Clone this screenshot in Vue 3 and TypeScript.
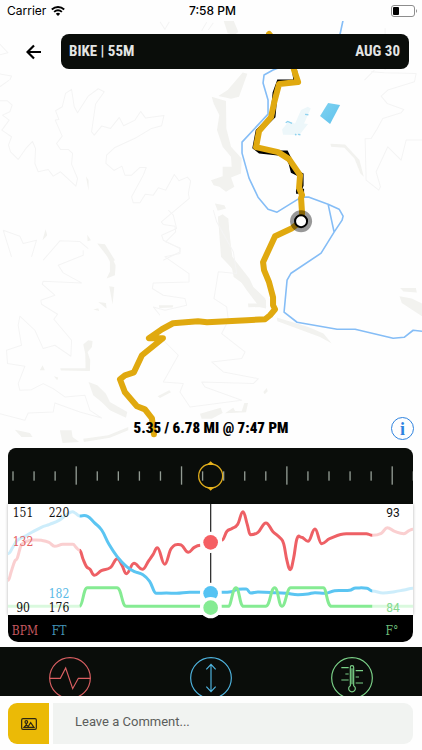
<script setup lang="ts">
import { computed, ref } from 'vue'

type Point = [number, number]

interface Segment {
  color: string
  faded: boolean
  points: Point[]
}

const RED = '#ee6065'
const BLUE = '#5bc5f2'
const GREEN = '#85eb93'

const position = ref(79)
const comment = ref('')

// Chart coordinates use three units per pixel.
const segments: Segment[] = [
  { color: RED, faded: true, points: [[25, 242], [35, 215], [45, 185], [53, 175], [64, 138], [78, 126], [100, 121], [125, 122], [148, 128], [165, 140], [190, 134], [220, 134], [230, 144], [240, 152]] },
  { color: BLUE, faded: true, points: [[25, 162], [40, 142], [52, 123], [75, 110], [98, 97], [125, 83], [150, 74], [178, 62], [200, 46], [218, 36], [228, 41], [240, 49]] },
  { color: GREEN, faded: true, points: [[25, 320], [130, 320], [240, 320]] },
  { color: RED, faded: false, points: [[240, 152], [250, 178], [260, 200], [271, 209], [284, 227], [305, 213], [333, 203], [353, 177], [367, 197], [380, 222], [403, 191], [428, 209], [448, 182], [460, 165], [473, 144], [495, 194], [515, 146], [542, 135], [566, 158], [584, 143], [602, 137]] },
  { color: BLUE, faded: false, points: [[240, 49], [264, 50], [284, 69], [306, 91], [328, 134], [352, 170], [380, 200], [403, 215], [430, 225], [450, 245], [470, 281], [500, 280], [530, 281], [570, 278], [602, 278]] },
  { color: RED, faded: false, points: [[667, 121], [682, 95], [696, 87], [714, 74], [730, 36], [743, 75], [752, 105], [775, 98], [799, 70], [820, 96], [841, 114], [852, 132], [862, 183], [872, 210], [882, 175], [892, 117], [905, 113], [925, 125], [946, 88], [966, 132], [990, 117], [1040, 102], [1100, 102], [1118, 107]] },
  { color: BLUE, faded: false, points: [[666, 278], [695, 276], [715, 269], [740, 268], [753, 280], [775, 277], [830, 279], [860, 281], [895, 285], [925, 283], [946, 279], [975, 281], [1005, 273], [1050, 272], [1068, 265], [1102, 266], [1118, 274]] },
  { color: RED, faded: true, points: [[1118, 107], [1145, 101], [1163, 84], [1185, 95], [1213, 102], [1228, 93], [1240, 89]] },
  { color: BLUE, faded: true, points: [[1118, 274], [1150, 280], [1185, 276], [1213, 271], [1240, 266]] },
  { color: GREEN, faded: true, points: [[1118, 320], [1180, 320], [1240, 320]] },
]

const greenLeft = 'M240 320 C250 318 251 264 263 264 H352 C366 264 366 320 380 320 H602'
const greenRight =
  'M666 320 H686 C695 320 698 264 709 264 C720 264 719 320 732 320 H798 C812 320 813 264 825 264 C836 264 837 320 847 320 C858 320 861 264 873 264 H971 C981 264 981 320 996 320 H1118'

function smooth(points: Point[]): string {
  let d = `M${points[0][0]} ${points[0][1]}`
  for (let i = 0; i < points.length - 1; i++) {
    const a = points[Math.max(i - 1, 0)]
    const b = points[i]
    const c = points[i + 1]
    const e = points[Math.min(i + 2, points.length - 1)]
    const turnB = (b[1] - a[1]) * (c[1] - b[1]) <= 0
    const turnC = (c[1] - b[1]) * (e[1] - c[1]) <= 0
    const span = (c[0] - b[0]) * 0.42
    const slopeB = turnB ? 0 : (c[1] - a[1]) / (c[0] - a[0])
    const slopeC = turnC ? 0 : (e[1] - b[1]) / (e[0] - b[0])
    d += ` C${b[0] + span} ${b[1] + slopeB * span} ${c[0] - span} ${c[1] - slopeC * span} ${c[0]} ${c[1]}`
  }
  return d
}

const lines = computed(() => segments.map((s) => ({ ...s, d: smooth(s.points) })))

const ticks = Array.from({ length: 20 }, (_, i) => ({
  x: 16 + i * 63.2,
  major: i % 5 === 3,
}))

const markers = [
  { y: 128, color: '#f55f63' },
  { y: 281, color: '#55c3f3' },
  { y: 324, color: '#85eb93' },
]

const route =
  'M269 34 L292 62 L294 70 L298 82 L279 84 L274 103 L271 117 L259 131 L256 147 L278 152 L289 159 L300 175 L299 188 L302 195 L301 198 L302 213 L301 221 L292 228 L275 236 L263 262 L264 270 L269 282 L273 297 L273 305 L275 309 L270 315 L265 319 L247 320 L207 322 L198 321 L173 323 L162 329 L149 338 L163 338 L142 355 L134 372 L125 375 L120 379 L125 392 L137 406 L145 409 L152 418 L154 434'
</script>

<template>
  <main class="screen">
    <section class="map">
      <svg class="terrain" viewBox="0 0 422 448" preserveAspectRatio="xMidYMid slice" aria-hidden="true">
        <g transform="scale(.33333)">
          <g class="hills">
            <g transform="translate(633 0)">
              <path d="M38 62 L68 62 L82 96 L70 105 L50 100Z" />
              <path d="M95 217 L109 221 L84 290 L60 296 L22 288 L50 270Z" />
              <path d="M2 290 L45 303 L46 385 L60 440 L92 475 L90 520 L60 532 L70 560 L45 575 L25 560 L8 555 L0 540 L35 528 L35 500 L62 500 L60 470 L35 440 L18 390 L25 345 L8 310Z" />
              <path d="M8 600 L12 610 L40 615 L45 625 L20 632Z" />
              <path d="M21 650 L36 645 L52 655 L62 800 L68 830 L165 900 L165 925 L145 920 L125 870 L30 770Z" />
              <path d="M358 431 L402 433 L445 480 L458 530 L448 520 L430 475 L400 443 L360 440Z" />
            </g>
            <g transform="translate(270 630)">
              <path d="M384 20 L398 12 L413 25 L427 140 L478 205 L490 230 L526 265 L526 290 L508 290 L470 240 L395 130Z" />
              <path d="M474 280 H515 L530 290 L475 291Z" />
              <path d="M560 322 L655 350 L700 370 L725 400 L690 380 L562 333Z" />
              <path d="M930 233 L977 233 L980 247 L940 244Z M928 258 L965 265 L996 280 V318 L935 278Z" />
              <path d="M207 285 L250 285 L248 292 L208 293Z" />
              <path d="M203 558 L238 540 L243 546 L210 563Z M520 545 L530 533 L533 543 L524 552Z" />
              <path d="M330 610 L392 592 L398 608 L365 625 L335 625Z M405 609 L430 592 L435 602 L455 603 L463 578 L474 578 L468 606Z" />
            </g>
            <g transform="translate(0 240)">
              <path d="M258 288 L266 300 L266 332Z M137 447 L142 465 L128 480Z M262 464 L273 480 L263 483Z M292 490 L315 492 L345 540 L335 545Z" />
            </g>
            <g transform="translate(0 750)">
              <path d="M313 0 L335 20 L347 45 L345 75 L320 85 L330 65 L330 35Z M328 108 L343 110 L338 163Z M280 178 L295 174 L298 182Z M295 155 L318 158 L320 175Z" />
              <path d="M250 283 L265 270 L278 272 L276 290 L263 305 L271 330 L270 362 L183 361 L181 354 L257 354 L256 310Z M128 345 L135 360 L120 360Z M162 378 L175 382 L172 390Z" />
              <path d="M266 395 L292 405 L318 430 L330 455 L382 485 L378 502 L330 480 L305 455 L280 435Z" />
              <path d="M45 538 L90 548 L98 560 L65 560Z M180 540 L215 540 L218 560 L238 575 L188 578Z M250 565 L325 555 L385 530 L385 540 L330 562 L252 575Z" />
            </g>
          </g>
          <g class="contours">
            <path transform="translate(0 240)" d="M0 20 L28 0 M0 62 H22 L37 75 L30 95 L8 105 L28 120 L6 150 L35 170 L26 195 L32 215 L55 238 L78 205 L98 184 L107 205 L105 250 L115 275 L145 268 L160 288 L182 275 L228 318 L233 295 L215 252 L218 220 L205 208 H182 L170 190 L187 168 L166 120 L177 118 L167 92 L187 80 L197 40 L215 28 L223 80 L233 98 L265 48 L295 26 L313 35 L287 72 L275 155 L283 165 L305 138 L332 145 L358 112 L371 137 L405 120 L422 94 L437 114 L492 106 L485 137 L455 145 L410 172 L345 202 L320 225 L318 250 L342 271 L366 258 L375 285 H395 L420 262 H439 L430 285 L395 350 L400 368 H420 L436 342 L460 345 L475 323 L497 330 L523 283 L537 302 L562 291 L572 302 L565 340 L568 355 L484 425 L490 433 L525 438 L527 455 L497 485 L540 503 V515 L490 540 M10 450 L60 468 L70 490 L110 480 L95 530 M10 450 L35 530 M130 540 L180 482 L240 484 L265 505" />
            <path transform="translate(0 750)" d="M250 0 L250 15 L175 45 L190 68 L245 98 L130 93 L127 102 L165 135 L123 150 L125 162 L173 192 L162 207 L215 270 L213 318 L165 285 L130 295 L105 240 L60 198 L55 225 L65 285 L20 300 L23 340 L75 348 L55 400 L60 420 L95 418 L130 400 L160 415 L195 440 L255 435 L270 480 L305 503 L240 485 L165 458 L160 485 L85 488 L75 510 L0 490" />
            <path transform="translate(270 630)" d="M235 0 L250 15 L260 55 L215 75 L220 90 L270 115 V130 L225 140 L297 190 V215 L190 218 L187 235 L220 255 L285 265 L290 285 L225 300 L190 290 L210 315 M370 0 L380 35 L430 125 L440 190 L385 185 L372 265 L410 290 L415 330 L395 370 L465 425 L455 445 L365 455 L400 485 L505 505 L490 520 L335 515 L345 530 L455 570 L300 590 L270 545 L280 520 L220 515 L265 435 L220 390" />
            <path transform="translate(633 210)" d="M480 5 L520 8 L615 10 L610 35 L530 60 L510 78 L528 100 L578 118 L570 128 L515 145 L497 178 L480 205 L462 206 L465 330 L503 360 L508 350 L495 305 L530 230 L570 270 L585 210 L633 210 M522 0 V-125 M460 30 L490 0" />
            <path d="M480 65 L495 88 L508 65 M0 132 L24 158 L0 164 M0 222 L35 228 L30 240 M605 92 L620 67 M625 90 L640 68" />
          </g>
          <path class="wetland" d="M903 330 L923 320 L932 325 L912 370 L924 372 L898 405 L849 404 L846 388 L865 365 L885 370Z" />
          <path class="ripples" d="M857 368 L863 364 L876 370 M915 343 L925 344 M885 402 L889 405 M894 403 L901 404" />
        </g>
        <defs>
          <linearGradient id="pond" x1="0" y1="0" x2="1" y2="1">
            <stop offset="0" stop-color="#7fd2f1" />
            <stop offset="1" stop-color="#60c2ec" />
          </linearGradient>
        </defs>
        <path fill="url(#pond)" d="M328 103 L340 105 L330 124 L320 116Z" />
        <path class="river" d="M343 20 L340 34 L320 52 L273 70 L264 75 L263 83 L268 100 L268 114 L242 142 L242 153 L249 178 L258 197 L268 209 L277 212 L298 199 L303 197 L309 197 L328 204 L339 209 L343 216 L342 220 L334 232 L321 253 L291 273 L287 280 L284 312 L297 322 L337 329 L355 329 L393 338 L404 337 L413 330 L422 331 M328 204 L334 232" />
        <path class="track" d="M294 66 L296 82 L279 82 L275 93 L273 116 L258 131 L255 147 L260 151 L278 153 M277 153 L286 153 L291 163 L293 171 L301 175 L301 185 L298 192 M296 191 L304 191" />
        <path class="route" :d="route" />
        <circle cx="301" cy="221" r="11" fill="#000" fill-opacity=".4" />
        <circle cx="301" cy="221" r="6" fill="#fff" stroke="#000" stroke-width="2" />
      </svg>

      <header class="top">
        <div class="status">
          <div class="carrier">
            <span>Carrier</span>
            <svg width="14" height="10" viewBox="0 0 14 10" aria-hidden="true">
              <g fill="none" stroke="#000" stroke-width="1.9">
                <path d="M.8 3.5 C4.4 .2 9.6 .2 13.2 3.5" />
                <path d="M3.1 5.9 C5.4 3.9 8.6 3.9 10.9 5.9" />
              </g>
              <path d="M7 10 L4.8 7.7 Q7 6 9.2 7.7Z" />
            </svg>
          </div>
          <time class="clock">7:58 PM</time>
          <svg class="battery" width="27" height="12" viewBox="0 0 27 12" aria-hidden="true">
            <rect x=".5" y=".5" width="23" height="11" rx="2.5" fill="#fff" stroke="#8d8d8d" />
            <rect x="2" y="2" width="6" height="8" rx="1" />
            <path d="M25 4 Q27 6 25 8Z" fill="#8d8d8d" />
          </svg>
        </div>
        <div class="bar">
          <button class="back" type="button" aria-label="Back">
            <svg width="16" height="16" viewBox="0 0 16 16" aria-hidden="true">
              <path d="M15 8 H2 M8 1.5 L1.5 8 L8 14.5" fill="none" stroke="#000" stroke-width="2.2" />
            </svg>
          </button>
          <h1 class="title"><span>BIKE | 55M</span><span>AUG 30</span></h1>
        </div>
      </header>

      <div class="progress">
        <p class="distance">5.35 / 6.78 MI @ 7:47 PM</p>
        <button class="info" type="button" aria-label="Information">i</button>
      </div>
    </section>

    <section class="panel">
      <div class="ruler">
        <svg viewBox="0 0 1215 168" aria-hidden="true">
          <rect
            v-for="tick in ticks"
            :key="tick.x"
            :x="tick.x - 3"
            :y="tick.major ? 55 : 70"
            width="4"
            :height="tick.major ? 55 : 28"
            fill="#929b93"
          />
          <circle cx="608" cy="84" r="36" fill="none" stroke="#dba91b" stroke-width="4" />
          <path d="M592 51 Q602 48 608 40 Q614 48 624 51Z M592 117 Q602 120 608 128 Q614 120 624 117Z" fill="#e5b11c" />
        </svg>
        <input v-model.number="position" type="range" min="0" max="100" aria-label="Position on route" />
      </div>

      <div class="chart">
        <svg viewBox="25 13 1215 332" aria-hidden="true">
          <path d="M633 13 V345" stroke="#333" stroke-width="4" />
          <g fill="none" stroke-width="9">
            <path
              v-for="(line, i) in lines"
              :key="i"
              :d="line.d"
              :stroke="line.color"
              :stroke-opacity="line.faded ? 0.3 : 1"
            />
            <path :d="greenLeft" stroke="#85eb93" />
            <path :d="greenRight" stroke="#85eb93" />
          </g>
          <template v-for="m in markers" :key="m.y">
            <circle cx="633" :cy="m.y" r="32" fill="#fff" />
            <circle cx="633" :cy="m.y" r="22" :fill="m.color" />
          </template>
        </svg>
        <div class="scales">
          <div class="scale bpm"><span>151</span><span class="now">132</span><span class="low">90</span></div>
          <div class="scale feet"><span>220</span><span class="now">182</span><span class="low">176</span></div>
          <div class="scale temp"><span>93</span><span class="now low">84</span></div>
        </div>
      </div>

      <div class="units">
        <span class="bpm">BPM</span>
        <span class="feet">FT</span>
        <span class="temp">F°</span>
      </div>
    </section>

    <nav class="metrics">
      <button type="button" aria-label="Heart rate">
        <svg viewBox="0 0 126 126" fill="none" stroke="#d95f62" stroke-width="3.5">
          <circle cx="63" cy="63" r="61" />
          <path d="M2 64 H34 L50 33 L71 95 L88 64 H124" />
        </svg>
      </button>
      <button type="button" aria-label="Elevation">
        <svg viewBox="0 0 126 126" fill="none" stroke="#4fb4df" stroke-width="3.5">
          <circle cx="63" cy="63" r="61" />
          <path d="M63 23 V103 M49 37 L63 22 L77 37 M49 89 L63 104 L77 89" />
        </svg>
      </button>
      <button type="button" aria-label="Temperature">
        <svg viewBox="0 0 126 126" fill="none" stroke="#7bd188" stroke-width="3.5">
          <circle cx="63" cy="63" r="61" />
          <path d="M58 86 V31 Q58 26 63 26 Q68 26 68 31 V86 A10 10 0 1 1 58 86Z M63 34 V82" />
          <path d="M31 32 H53 M43 51 H53 M31 69 H53 M74 41 H96 M74 60 H84 M74 78 H96" />
        </svg>
      </button>
    </nav>

    <form class="comment" @submit.prevent>
      <button type="button" aria-label="Add picture">
        <svg width="16" height="12" viewBox="0 0 48 36" fill="none" stroke="#2b2612" stroke-width="3.5" aria-hidden="true">
          <rect x="2" y="2" width="44" height="32" rx="4" />
          <circle cx="16" cy="12" r="4" />
          <path d="M9 28 L15 21 L22 25 L29 14 L39 28Z M16 16 V21" />
        </svg>
      </button>
      <input v-model="comment" type="text" placeholder="Leave a Comment..." aria-label="Leave a comment" />
    </form>
  </main>
</template>

<style>
body {
  margin: 0;
  background: #fff;
}
</style>

<style scoped>
.screen {
  display: flex;
  flex-direction: column;
  min-height: 100vh;
  box-sizing: border-box;
  padding-bottom: 6px;
  background: #fefefe;
  font-family: Roboto, sans-serif;
}

button {
  padding: 0;
  border: 0;
  background: none;
  cursor: pointer;
}

svg {
  display: block;
}

.map {
  position: relative;
  display: flex;
  flex: 1;
  flex-direction: column;
  justify-content: space-between;
}

.terrain {
  position: absolute;
  inset: 0;
  width: 100%;
  height: 100%;
}

.hills {
  fill: #f2f2ef;
}

.contours {
  fill: none;
  stroke: #f4f4f4;
  stroke-width: 3;
  stroke-linejoin: round;
}

.wetland {
  fill: #edf7fa;
}

.ripples {
  fill: none;
  stroke: #8fd2ef;
  stroke-width: 4;
}

.river {
  fill: none;
  stroke: #85bdf6;
  stroke-width: 1.6;
  stroke-linejoin: round;
}

.track {
  fill: none;
  stroke: #000;
  stroke-width: 5;
}

.route {
  fill: none;
  stroke: #e0a90f;
  stroke-width: 6;
  stroke-linejoin: round;
  stroke-linecap: round;
}

.top,
.progress {
  position: relative;
}

.status {
  display: grid;
  grid-template-columns: 1fr auto 1fr;
  align-items: center;
  height: 21px;
  padding: 0 4px 0 7px;
  background: #fefefe;
  font: 12px/21px Inter, sans-serif;
}

.carrier {
  display: flex;
  align-items: center;
  gap: 5px;
}

.clock {
  font-weight: 500;
}

.battery {
  justify-self: end;
}

.bar {
  display: flex;
  align-items: center;
  padding: 13px 13px 0 20px;
}

.back {
  display: grid;
  place-items: center;
  width: 28px;
  height: 35px;
  margin-right: 13px;
}

.title {
  display: flex;
  flex: 1;
  justify-content: space-between;
  margin: 0;
  padding: 0 9px 0 8px;
  border-radius: 8px;
  background: #0a0d0a;
  color: #e4e5e4;
  font: 700 15px/35px "Roboto Condensed", "Liberation Sans Narrow", sans-serif;
}

.progress {
  display: grid;
  grid-template-columns: 1fr auto 1fr;
  align-items: center;
  padding: 0 8px 8px;
}

.distance {
  grid-column: 2;
  margin: 0;
  color: #000;
  font: 900 15px/23px "Roboto Condensed", "Liberation Sans Narrow", sans-serif;
}

.info {
  justify-self: end;
  box-sizing: border-box;
  width: 23px;
  height: 23px;
  border: 1px solid #2e83df;
  border-radius: 50%;
  color: #2e83df;
  font: 700 18px/20px "Liberation Serif", serif;
}

.panel {
  margin: 0 9px 5px 8px;
  border-radius: 10px;
  background: #000;
}

.ruler {
  position: relative;
  overflow: hidden;
  border-radius: 8px 8px 0 0;
  background: #0a0d0a;
}

.ruler input {
  position: absolute;
  inset: 0;
  width: 100%;
  height: 100%;
  margin: 0;
  opacity: 0;
  cursor: pointer;
}

.chart {
  position: relative;
  background: #fff;
  box-shadow: 0 0 3px rgba(0, 0, 0, 0.3);
}

.chart > svg {
  overflow: visible;
}

.scales {
  position: absolute;
  inset: 0;
  display: flex;
  color: #111;
  font: 12px/14px "DejaVu Serif Condensed", "DejaVu Serif", serif;
}

.scale {
  display: flex;
  flex-direction: column;
  align-items: center;
  width: 30px;
  padding: 2px 0 0;
}

.scales .feet {
  margin-left: 6px;
}

.scales .temp {
  margin-left: auto;
  margin-right: 5px;
  font-family: Roboto, sans-serif;
}

.scales .bpm .now {
  margin-top: 15px;
  color: #e45e62;
}

.scales .feet .now {
  margin-top: auto;
  color: #58b9e6;
}

.scales .temp .now {
  color: #85d98f;
}

.scales .bpm .low,
.scales .temp .low {
  margin-top: auto;
}

.units {
  display: flex;
  height: 27px;
  font: 12px/32px "DejaVu Serif Condensed", "DejaVu Serif", serif;
}

.units span {
  width: 34px;
  text-align: center;
}

.units .bpm {
  color: #c65a60;
}

.units .feet {
  color: #4596bb;
}

.units .temp {
  margin-left: auto;
  margin-right: 4px;
  color: #6cbd7a;
}

.metrics {
  display: grid;
  grid-template-columns: repeat(3, 1fr);
  justify-items: center;
  height: 49px;
  overflow: hidden;
  background: #0a0d0a;
}

.metrics button {
  width: 42px;
  height: 42px;
  margin-top: 10px;
}

.comment {
  display: flex;
  gap: 4px;
  padding: 7px 9px 0 8px;
}

.comment button {
  display: grid;
  place-items: center;
  width: 41px;
  height: 41px;
  border-radius: 9px 0 0 9px;
  background: #ebba06;
}

.comment input {
  flex: 1;
  min-width: 0;
  box-sizing: border-box;
  height: 41px;
  padding: 0 22px 4px;
  border: 0;
  border-radius: 0 9px 9px 0;
  background: #f1f3f1;
  color: #333;
  font: 13px/20px Roboto, sans-serif;
}

.comment input::placeholder {
  color: #5b5d5b;
  opacity: 1;
}
</style>
